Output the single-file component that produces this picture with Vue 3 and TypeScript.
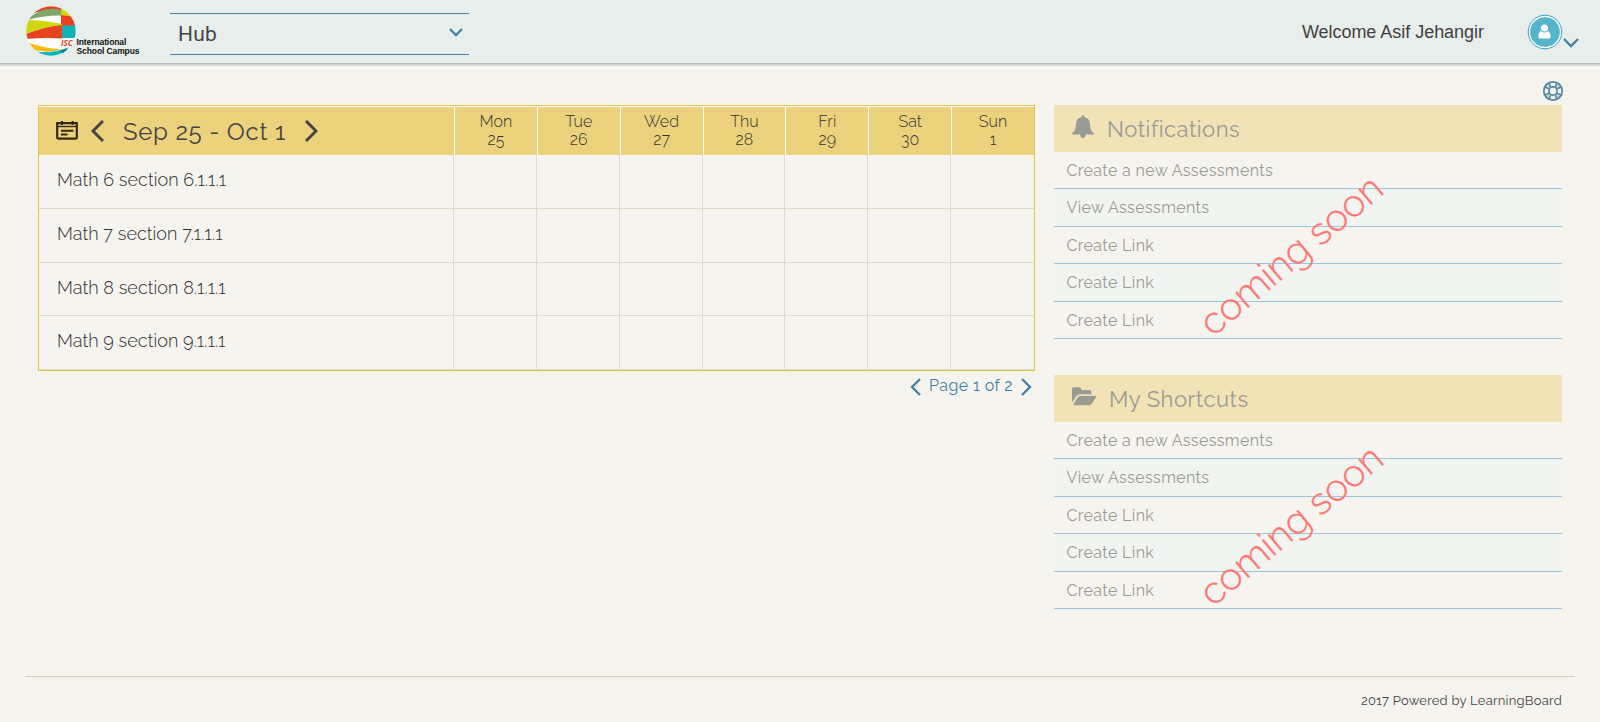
<script setup lang="ts">
interface Day {
  name: string
  date: string
}

interface Panel {
  title: string
  icon: 'bell' | 'folder'
  links: string[]
}

const days: Day[] = [
  { name: 'Mon', date: '25' },
  { name: 'Tue', date: '26' },
  { name: 'Wed', date: '27' },
  { name: 'Thu', date: '28' },
  { name: 'Fri', date: '29' },
  { name: 'Sat', date: '30' },
  { name: 'Sun', date: '1' },
]

const sections: string[] = [
  'Math 6 section 6.1.1.1',
  'Math 7 section 7.1.1.1',
  'Math 8 section 8.1.1.1',
  'Math 9 section 9.1.1.1',
]

const links: string[] = ['Create a new Assessments', 'View Assessments', 'Create Link', 'Create Link', 'Create Link']

const panels: Panel[] = [
  { title: 'Notifications', icon: 'bell', links },
  { title: 'My Shortcuts', icon: 'folder', links },
]
</script>

<template>
  <div class="page">
    <header class="topbar">
      <div class="logo">
        <svg class="globe" width="50" height="50" viewBox="0 0 50 50">
          <defs>
            <clipPath id="globe-clip"><circle cx="25" cy="25" r="24.7" /></clipPath>
          </defs>
          <g clip-path="url(#globe-clip)">
            <rect width="50" height="50" fill="#fff" />
            <path d="M0 0H36V10Q20 1 6 8Z" fill="#e8431f" />
            <path d="M2 13Q17 -1 36 4V9.5Q18 9 2 14Z" fill="#7ea66b" />
            <path d="M35 0Q43 4 46 11L35 9Z" fill="#d0d80d" />
            <path d="M35 9L50 11V20H35Z" fill="#e8431f" />
            <path d="M0 14Q17 14 36 18V19.5Q18 21 0 28Z" fill="#d0d80d" />
            <path d="M0 28Q18 21 36 19V32.5Q17 31.5 0 33Z" fill="#e8431f" />
            <path d="M36 19.5H50V32H36Z" fill="#10b2b8" />
            <path d="M2 36.5Q17 42 36 43.5Q20 47 8 44Z" fill="#f9b90c" />
            <path d="M10 45.5Q27 47.5 42 41.5L36 50H15Z" fill="#12b5bb" />
            <path d="M34 45L42 42L38 48Z" fill="#087d84" />
          </g>
        </svg>
        <span class="logo-isc">ISC</span>
        <span class="logo-name">International<br />School Campus</span>
      </div>
      <div class="hub-select">
        <span>Hub</span>
        <svg width="14" height="9" viewBox="0 0 14 9"><path d="M1 1L7 7L13 1" /></svg>
      </div>
      <div class="account">
        <span class="welcome">Welcome Asif Jehangir</span>
        <svg class="avatar" width="36" height="36" viewBox="0 0 36 36">
          <circle cx="18" cy="18" r="16.8" fill="#f7fbfb" stroke="#3da0cb" />
          <circle cx="18" cy="18" r="14.8" fill="#54b5ca" />
          <circle cx="17.5" cy="14" r="3.5" fill="#fff" />
          <path d="M13.5 17Q17.5 20 21.5 17Q23.8 19 23.5 23.2Q23.4 24.5 22 24.5H13Q11.5 24.5 11.5 23.2Q11.3 19 13.5 17Z" fill="#fff" />
        </svg>
        <svg class="account-arrow" width="16" height="10" viewBox="0 0 16 10"><path d="M1 1L8 8L15 1" /></svg>
      </div>
    </header>

    <main class="content">
      <section class="calendar">
        <div class="grid">
          <div class="week">
            <svg class="calendar-icon" width="22" height="19" viewBox="0 0 22 19">
              <path d="M1.2 2.2H20.8V16.3Q20.8 17.6 19.3 17.6H2.7Q1.2 17.6 1.2 16.3Z" fill="none" stroke="#33290c" stroke-width="2.2" />
              <path d="M1 5.5H21" stroke="#33290c" stroke-width="1.4" />
              <path d="M6 0V4M16.5 0V4" stroke="#33290c" stroke-width="2" />
              <path d="M5 9.8H17.5M5 13.5H11.5" stroke="#33290c" stroke-width="2" />
            </svg>
            <svg class="previous" width="13" height="22" viewBox="0 0 13 22"><path d="M12 1L2 11L12 21" /></svg>
            <h1>Sep 25 - Oct 1</h1>
            <svg class="next" width="13" height="22" viewBox="0 0 13 22"><path d="M1 1L11 11L1 21" /></svg>
          </div>
          <div v-for="day in days" :key="day.name" class="day">
            <span>{{ day.name }}</span>
            <span>{{ day.date }}</span>
          </div>
          <template v-for="section in sections" :key="section">
            <div class="cell section-name">{{ section }}</div>
            <div v-for="day in days" :key="day.name" class="cell"></div>
          </template>
        </div>
        <nav class="pagination">
          <svg width="11" height="18" viewBox="0 0 11 18"><path d="M10 1L2 9L10 17" /></svg>
          <span>Page 1 of 2</span>
          <svg width="11" height="18" viewBox="0 0 11 18"><path d="M1 1L9 9L1 17" /></svg>
        </nav>
      </section>

      <aside class="sidebar">
        <div class="help">
          <svg width="22" height="22" viewBox="0 0 22 22" fill="none" stroke="#5689a4">
            <circle cx="11" cy="11" r="9.2" stroke-width="1.8" />
            <circle cx="11" cy="11" r="4.1" stroke-width="1.7" />
            <circle cx="11" cy="11" r="6.7" stroke-width="4" stroke-dasharray="4.2 6.324" stroke-dashoffset="-3.16" opacity=".25" />
            <path d="M7 2L8.5 7M15 2L13.5 7M20 7L15 8.5M20 15L15 13.5M15 20L13.5 15M7 20L8.5 15M2 15L7 13.5M2 7L7 8.5" stroke-width="1.6" />
          </svg>
        </div>
        <section v-for="panel in panels" :key="panel.title" class="panel">
          <h2>
            <svg v-if="panel.icon === 'bell'" class="bell" width="22" height="24" viewBox="0 0 22 24" fill="#9b9b95">
              <path d="M11 0Q12.3 0 12.3 2Q18 3.4 18 9Q18 16 21.8 18V19.5H.2V18Q4 16 4 9Q4 3.4 9.7 2Q9.7 0 11 0Z" />
              <path d="M8 19H14Q13.7 23 11 23Q8.3 23 8 19Z" />
            </svg>
            <svg v-else class="folder" width="25" height="19" viewBox="0 0 25 19" fill="#9b9b95">
              <path d="M0 15V2Q0 .3 1.8 .3H7.5Q9.2 .3 9.2 2V3H17.3Q19.3 3 19.3 5V7.3H8Q5.6 7.3 4.2 9.2L.4 15Z" />
              <path d="M8.3 9H23.4Q24.9 9 24 10.4L19.4 17Q18.6 18.2 17 18.2H2.2Q.7 18.2 1.6 16.9L5.7 10.5Q6.7 9 8.3 9Z" />
            </svg>
            <span>{{ panel.title }}</span>
          </h2>
          <ul>
            <li v-for="(link, index) in panel.links" :key="index">{{ link }}</li>
          </ul>
          <div class="coming-soon">coming soon</div>
        </section>
      </aside>
    </main>

    <footer class="footer">2017 Powered by LearningBoard</footer>
  </div>
</template>

<style>
body {
  margin: 0;
  background: #f6f4ef;
}
</style>

<style scoped>
.page {
  display: flex;
  flex-direction: column;
  height: 722px;
  overflow: hidden;
  background: #f6f4ef;
  color: #444;
  font-family: Raleway, Lato, sans-serif;
}

svg {
  flex: none;
}

.topbar {
  display: flex;
  flex: none;
  height: 64px;
  box-sizing: border-box;
  padding: 0 21px 0 26px;
  background: #e8eeec;
  border-bottom: 1px solid #b9bfbe;
  box-shadow: 0 1px 0 #d2d4d3, 0 2px 0 #e2e3e1, 0 3px 0 #f1f1f0, 0 5px 0 #fdfdfc;
}

.logo {
  position: relative;
  width: 144px;
}

.globe {
  position: absolute;
  top: 6px;
  left: 0;
}

.logo-isc {
  position: absolute;
  top: 38px;
  left: 35px;
  color: #e8431f;
  font: italic bold 8px/10px "Open Sans", sans-serif;
}

.logo-name {
  position: absolute;
  top: 37.5px;
  left: 50.5px;
  color: #111;
  font: bold 8.5px/9.5px "Liberation Sans", sans-serif;
  letter-spacing: -0.1px;
  white-space: nowrap;
}

.hub-select {
  display: flex;
  align-items: center;
  justify-content: space-between;
  width: 299px;
  height: 42px;
  margin-top: 13px;
  padding: 0 6px 0 8px;
  box-sizing: border-box;
  border-top: 1px solid #4784a3;
  border-bottom: 1px solid #4784a3;
  color: #444;
  font: 21px/40px Roboto, sans-serif;
  letter-spacing: 0.2px;
}

.hub-select svg {
  margin-top: -3px;
}

.hub-select path,
.account-arrow path,
.pagination path {
  fill: none;
  stroke: #427fa4;
  stroke-width: 2.3;
}

.account {
  display: flex;
  margin-left: auto;
}

.welcome {
  margin-right: 43px;
  color: #3f3f3f;
  font: 18px/64px "Liberation Sans", sans-serif;
  letter-spacing: -0.03px;
}

.avatar {
  margin-top: 13.5px;
}

.account-arrow {
  margin-top: 38px;
}

.content {
  display: flex;
  flex: none;
  box-sizing: border-box;
  height: 612px;
  padding: 15px 38px 0;
}

.calendar {
  width: 997px;
  padding-top: 26px;
}

.grid {
  display: grid;
  grid-template-columns: 415px repeat(7, minmax(0, 1fr));
  grid-template-rows: 49px 54px 54px 53px 54px;
  border: 1px solid #e8c24a;
}

.week,
.day {
  box-sizing: border-box;
  border-top: 1px solid #fff;
  background: #ecd27c;
}

.week {
  display: flex;
  align-items: center;
  padding-left: 17px;
}

.week h1 {
  width: 163px;
  margin: 2px 19px 0;
  font-size: 24px;
  font-weight: 400;
  line-height: 46px;
  letter-spacing: 0.7px;
  white-space: nowrap;
}

.previous,
.next {
  fill: none;
  stroke: #444;
  stroke-width: 3;
}

.previous {
  margin-left: 13px;
}

.calendar-icon {
  margin-top: -2px;
}

.day {
  display: flex;
  flex-direction: column;
  padding-top: 6px;
  border-left: 1px solid #fff;
  color: #333;
  font-size: 16px;
  font-weight: 300;
  line-height: 18px;
  letter-spacing: 0.1px;
  text-align: center;
}

.cell {
  box-sizing: border-box;
  border-right: 1px solid #dfdbc8;
  border-bottom: 1px solid #dcdcc8;
}

.cell:nth-child(8n) {
  border-right: 0;
}

.section-name {
  padding-left: 18px;
  color: #2c2c2c;
  font-size: 18px;
  font-weight: 300;
  line-height: 50px;
  letter-spacing: 0.05px;
}

.pagination {
  display: flex;
  align-items: center;
  justify-content: flex-end;
  padding: 7px 3px 0 0;
  color: #427fa4;
  font-size: 16px;
  line-height: 20px;
  letter-spacing: 0.4px;
}

.pagination span {
  width: 83px;
  margin: -3px 9px 0 8px;
  white-space: nowrap;
}

.sidebar {
  width: 508px;
  margin-left: 19px;
}

.help {
  display: flex;
  justify-content: flex-end;
  height: 25px;
  margin-right: -2px;
  padding-top: 1px;
}

.panel {
  position: relative;
  margin-bottom: 36px;
  color: #9b9b95;
}

.panel h2 {
  display: flex;
  height: 47px;
  margin: 0;
  padding-left: 18px;
  background: #f1e3b6;
  font-size: 22px;
  font-weight: 400;
  line-height: 48px;
  letter-spacing: 0.5px;
  font-variant-ligatures: common-ligatures;
}

.bell {
  margin: 10px 13px 0 0;
}

.folder {
  margin: 12px 12px 0 0;
}

.panel ul {
  display: grid;
  grid-template-rows: 37px 38px 37px 38px 37px;
  margin: 0;
  padding: 0;
  list-style: none;
}

.panel li {
  padding-left: 12.5px;
  border-bottom: 1px solid #99c5da;
  font-size: 16px;
  line-height: 38px;
  letter-spacing: 0.36px;
}

.panel li:nth-child(even) {
  background: #f2f4f1;
}

.coming-soon {
  position: absolute;
  top: 126px;
  left: 117px;
  width: 240px;
  color: #ff7773;
  font-size: 38px;
  font-weight: 300;
  line-height: 48px;
  text-align: center;
  white-space: nowrap;
  transform: rotate(-40deg);
  -webkit-text-stroke: 0.3px #ff7773;
}

.footer {
  margin: 0 25px;
  padding: 14px 13px 0;
  border-top: 1px solid #d8d0ae;
  font-size: 13px;
  line-height: 20px;
  letter-spacing: 0.25px;
  text-align: right;
}
</style>
